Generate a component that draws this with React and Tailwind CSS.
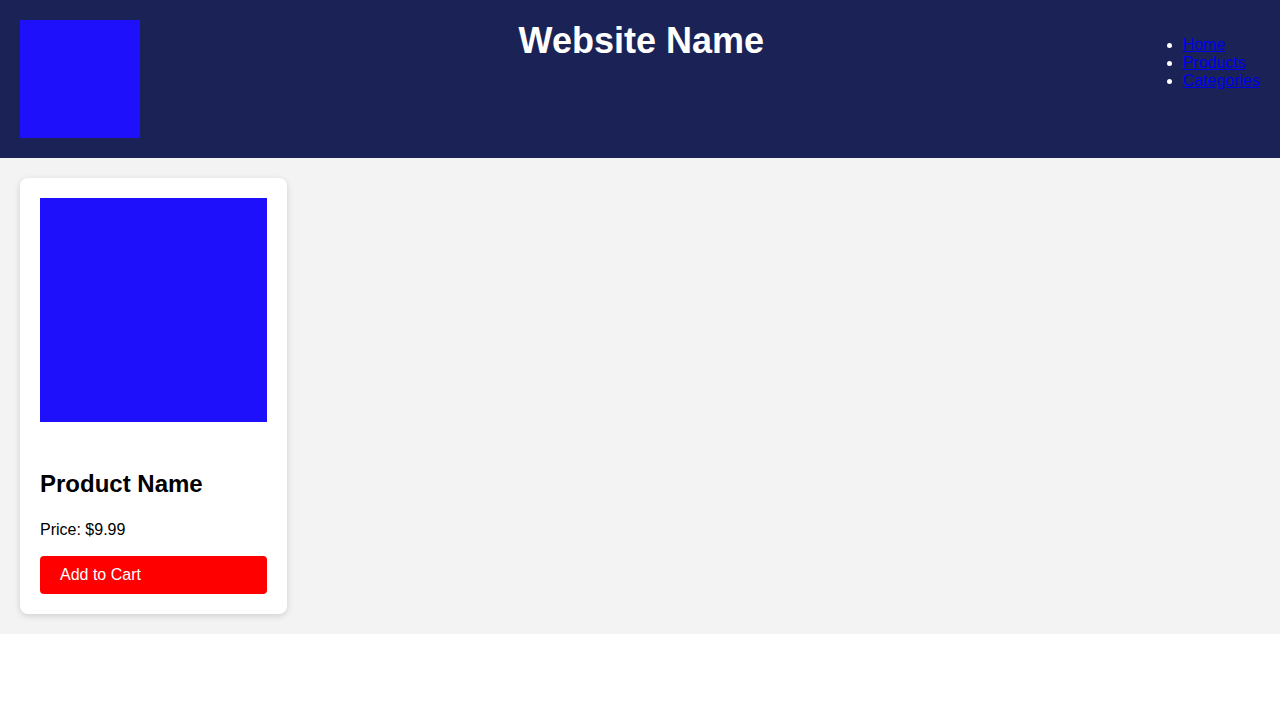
export default function App() {
  return (
    <div className="font-['Liberation_Sans',Arial,sans-serif] text-black">
      <header className="flex justify-between items-start bg-[#1b2356] p-5 h-[158px]">
        <div className="w-[120px] h-[118px] bg-[#1e10fa]" />
        <h1 className="text-white text-[36px] font-bold leading-[42px]">Website Name</h1>
        <nav>
          <ul className="list-disc pl-10 mt-4 text-white text-[16px] leading-[18px]">
            <li><a href="#" className="text-[#0000ee] underline">Home</a></li>
            <li><a href="#" className="text-[#0000ee] underline">Products</a></li>
            <li><a href="#" className="text-[#0000ee] underline">Categories</a></li>
          </ul>
        </nav>
      </header>
      <main className="bg-[#f3f3f3] p-5 flex">
        <div className="w-[267px] bg-white rounded-lg p-5 shadow-[0_2px_6px_rgba(0,0,0,0.15)] flex flex-col">
          <div className="w-[227px] h-[224px] bg-[#1e10fa]" />
          <h2 className="mt-[48px] text-[24px] font-bold leading-[28px]">Product Name</h2>
          <p className="mt-[23px] text-[16px] leading-[18px]">Price: $9.99</p>
          <button className="mt-[17px] h-[38px] bg-[#ff0000] text-white text-[16px] text-left px-5 rounded">Add to Cart</button>
        </div>
      </main>
    </div>
  );
}
